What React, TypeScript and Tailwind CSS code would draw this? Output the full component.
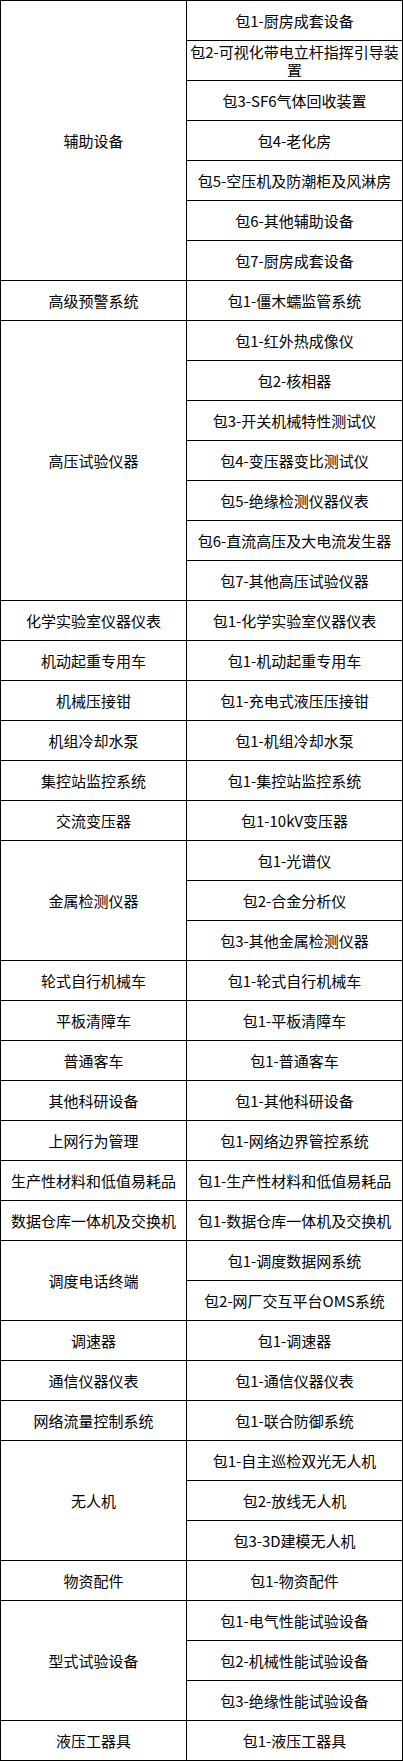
import React from 'react';

interface Group {
    name: string;
    items: string[];
}

const groups: Group[] = [
    {
        name: '辅助设备',
        items: [
            '包1-厨房成套设备',
            '包2-可视化带电立杆指挥引导装置',
            '包3-SF6气体回收装置',
            '包4-老化房',
            '包5-空压机及防潮柜及风淋房',
            '包6-其他辅助设备',
            '包7-厨房成套设备',
        ],
    },
    { name: '高级预警系统', items: ['包1-僵木蠕监管系统'] },
    {
        name: '高压试验仪器',
        items: [
            '包1-红外热成像仪',
            '包2-核相器',
            '包3-开关机械特性测试仪',
            '包4-变压器变比测试仪',
            '包5-绝缘检测仪器仪表',
            '包6-直流高压及大电流发生器',
            '包7-其他高压试验仪器',
        ],
    },
    { name: '化学实验室仪器仪表', items: ['包1-化学实验室仪器仪表'] },
    { name: '机动起重专用车', items: ['包1-机动起重专用车'] },
    { name: '机械压接钳', items: ['包1-充电式液压压接钳'] },
    { name: '机组冷却水泵', items: ['包1-机组冷却水泵'] },
    { name: '集控站监控系统', items: ['包1-集控站监控系统'] },
    { name: '交流变压器', items: ['包1-10kV变压器'] },
    { name: '金属检测仪器', items: ['包1-光谱仪', '包2-合金分析仪', '包3-其他金属检测仪器'] },
    { name: '轮式自行机械车', items: ['包1-轮式自行机械车'] },
    { name: '平板清障车', items: ['包1-平板清障车'] },
    { name: '普通客车', items: ['包1-普通客车'] },
    { name: '其他科研设备', items: ['包1-其他科研设备'] },
    { name: '上网行为管理', items: ['包1-网络边界管控系统'] },
    { name: '生产性材料和低值易耗品', items: ['包1-生产性材料和低值易耗品'] },
    { name: '数据仓库一体机及交换机', items: ['包1-数据仓库一体机及交换机'] },
    { name: '调度电话终端', items: ['包1-调度数据网系统', '包2-网厂交互平台OMS系统'] },
    { name: '调速器', items: ['包1-调速器'] },
    { name: '通信仪器仪表', items: ['包1-通信仪器仪表'] },
    { name: '网络流量控制系统', items: ['包1-联合防御系统'] },
    { name: '无人机', items: ['包1-自主巡检双光无人机', '包2-放线无人机', '包3-3D建模无人机'] },
    { name: '物资配件', items: ['包1-物资配件'] },
    { name: '型式试验设备', items: ['包1-电气性能试验设备', '包2-机械性能试验设备', '包3-绝缘性能试验设备'] },
    { name: '液压工器具', items: ['包1-液压工器具'] },
];

// full class names so tailwind picks them up
const spanClass: Record<number, string> = {
    1: 'row-span-1',
    2: 'row-span-2',
    3: 'row-span-3',
    7: 'row-span-7',
};

const cell = 'bg-white flex items-center justify-center text-center px-[1px] leading-[18px]';

export default function App() {
    return (
        <div className="bg-white w-[403px] min-h-[1761px]">
            <div
                className="grid grid-cols-[185px_215px] auto-rows-[39px] gap-px bg-black border border-black w-[403px] text-[15px] text-black"
                style={{ fontFamily: '"Noto Sans CJK SC", "Noto Sans", sans-serif' }}
            >
                {groups.map(group => (
                    <React.Fragment key={group.name}>
                        <div className={`${cell} col-start-1 ${spanClass[group.items.length]}`}>
                            {group.name}
                        </div>
                        {group.items.map(item => (
                            <div key={item} className={`${cell} col-start-2`}>
                                {item}
                            </div>
                        ))}
                    </React.Fragment>
                ))}
            </div>
        </div>
    );
}
